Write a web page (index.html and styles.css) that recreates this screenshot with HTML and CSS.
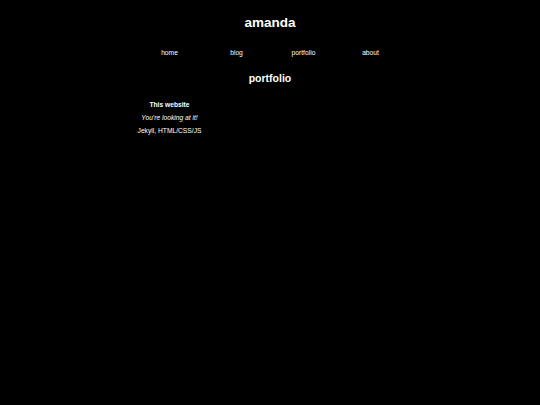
FILE: index.html
```html
<!DOCTYPE html>
<html>
<head>
<meta charset="utf-8">
<link rel="stylesheet" href="styles.css">
</head>
<body>
<header class="site-header">
  <h1 class="site-title">amanda</h1>
  <nav class="nav">
    <a class="nav-link" href="#">home</a>
    <a class="nav-link" href="#">blog</a>
    <a class="nav-link" href="#">portfolio</a>
    <a class="nav-link" href="#">about</a>
  </nav>
</header>
<main class="main">
  <h2 class="page-title">portfolio</h2>
  <div class="grid">
    <div class="project">
      <div class="project-name">This website</div>
      <div class="project-desc">You're looking at it!</div>
      <div class="project-tech">Jekyll, HTML/CSS/JS</div>
    </div>
  </div>
</main>
</body>
</html>
```
FILE: styles.css
```css
html, body {
  margin: 0;
  padding: 0;
  background: #000;
  color: #fff;
  font-family: "Liberation Sans", Arial, sans-serif;
}
.site-header {
  text-align: center;
  padding-top: 15px;
}
.site-title {
  margin: 0;
  font-size: 13.5px;
  line-height: 16px;
  font-weight: bold;
}
.nav {
  width: 268px;
  margin: 18px auto 0;
  display: grid;
  grid-template-columns: repeat(4, 1fr);
}
.nav-link {
  color: #fff;
  text-decoration: none;
  font-size: 6.7px;
  line-height: 8px;
  text-align: center;
}
.main {
  width: 268px;
  margin: 0 auto;
}
.page-title {
  margin: 14px 0 0;
  text-align: center;
  font-size: 10.5px;
  line-height: 14px;
  font-weight: bold;
}
.grid {
  margin-top: 16px;
  display: grid;
  grid-template-columns: repeat(4, 1fr);
}
.project {
  text-align: center;
  font-size: 6.7px;
  line-height: 8px;
  display: flex;
  flex-direction: column;
  gap: 5.2px;
}
.project-name { font-weight: bold; }
.project-desc { font-style: italic; }
.project-tech { white-space: nowrap; }
```
